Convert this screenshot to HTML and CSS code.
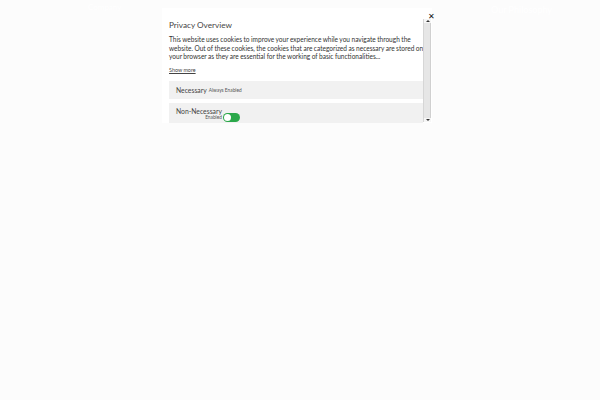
FILE: index.html
```html
<!DOCTYPE html>
<html>
<head>
<meta charset="utf-8">
<link rel="stylesheet" href="styles.css">
</head>
<body>
<header class="topbar">
  <span class="brand">Company</span>
  <nav class="nav">Our Philosophy</nav>
</header>
<div class="modal">
  <div class="modal-body">
    <h2 class="title">Privacy Overview</h2>
    <p class="text">This website uses cookies to improve your experience while you navigate through the website. Out of these cookies, the cookies that are categorized as necessary are stored on your browser as they are essential for the working of basic functionalities...</p>
    <a class="more">Show more</a>
    <div class="row">
      <span class="row-label">Necessary</span>
      <span class="row-note">Always Enabled</span>
    </div>
    <div class="row row-switch">
      <div class="switch-label">
        <span class="row-label">Non-Necessary</span>
        <span class="row-note">Enabled</span>
      </div>
      <span class="toggle"><span class="knob"></span></span>
    </div>
  </div>
  <div class="scrollbar">
    <span class="arrow up"></span>
    <span class="thumb"></span>
    <span class="arrow down"></span>
  </div>
  <span class="close">&#x2715;</span>
</div>
</body>
</html>
```

FILE: styles.css
```css
html, body {
  margin: 0;
  padding: 0;
}
body {
  width: 600px;
  height: 400px;
  background: #fcfcfc;
  font-family: "Lato", "Open Sans", sans-serif;
  overflow: hidden;
  position: relative;
}
.topbar {
  display: flex;
  justify-content: space-between;
  padding: 2px 48px 0 88px;
  color: #ffffff;
  font-size: 8px;
}
.nav {
  font-size: 9px;
  padding-top: 2px;
}
.modal {
  position: absolute;
  left: 162px;
  top: 8px;
  width: 270px;
  height: 115px;
  background: #ffffff;
  display: flex;
}
.modal-body {
  flex: 1;
  min-width: 0;
  padding: 12px 0 0 7px;
  overflow: hidden;
}
.title {
  margin: 0;
  font-size: 8.2px;
  font-weight: 400;
  color: #444;
  line-height: 11px;
}
.text {
  width: 256px;
  margin: 5px 0 0;
  font-size: 6.55px;
  line-height: 8.5px;
  word-spacing: -0.2px;
  color: #333;
}
.more {
  display: block;
  margin-top: 4px;
  font-size: 5.4px;
  line-height: 8px;
  color: #444;
  text-decoration: underline;
}
.row {
  margin-top: 7px;
  background: #f1f1f1;
  height: 18px;
  display: flex;
  align-items: center;
  padding-left: 7px;
  gap: 2px;
}
.row + .row {
  margin-top: 4px;
  height: 22px;
  align-items: flex-start;
  padding-top: 5px;
  gap: 1px;
}
.row-label {
  font-size: 6.8px;
  color: #444;
}
.row-note {
  font-size: 4.8px;
  color: #555;
}
.switch-label {
  display: flex;
  flex-direction: column;
  align-items: flex-end;
  line-height: 6px;
}
.toggle {
  margin-top: 5px;
  width: 17px;
  height: 9px;
  border-radius: 5px;
  background: #2ba84a;
  display: flex;
  align-items: center;
  padding-left: 1px;
  box-sizing: border-box;
}
.knob {
  width: 7px;
  height: 7px;
  border-radius: 50%;
  background: #fff;
}
.scrollbar {
  width: 7px;
  margin: 11px 1px 1px 0;
  display: flex;
  flex-direction: column;
  background: #ececec;
  border-left: 1px solid #d6d6d6;
}
.arrow {
  height: 4px;
  position: relative;
  background: #f6f6f6;
}
.arrow.up::after, .arrow.down::after {
  content: "";
  position: absolute;
  left: 1.5px;
  border-left: 2px solid transparent;
  border-right: 2px solid transparent;
}
.arrow.up::after {
  top: 1px;
  border-bottom: 2px solid #333;
}
.arrow.down::after {
  top: 1px;
  border-top: 2px solid #333;
}
.thumb {
  flex: 1;
  background: #e6e6e6;
  border-right: 1px solid #d0d0d0;
}
.close {
  position: absolute;
  right: -3px;
  top: 4px;
  font-size: 8px;
  color: #111;
  line-height: 8px;
}
```
